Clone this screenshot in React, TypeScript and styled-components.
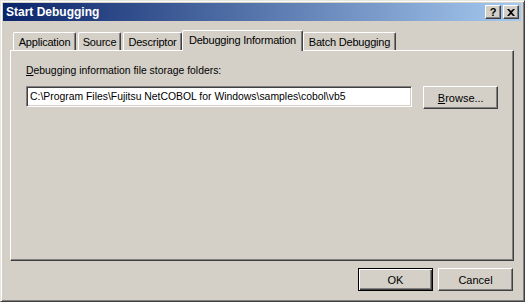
import React from "react";
import styled, { createGlobalStyle } from "styled-components";

const GlobalStyle = createGlobalStyle`
  html, body {
    margin: 0;
    padding: 0;
    background: #d4d0c8;
  }
  body {
    font-family: "Liberation Sans", Arial, sans-serif;
    font-size: 10px;
    color: #000;
  }
`;

const tabs = [
  { label: "Application", width: 63 },
  { label: "Source", width: 43 },
  { label: "Descriptor", width: 59 },
  { label: "Debugging Information", width: 121, active: true },
  { label: "Batch Debugging", width: 93 },
];

const App = () => {
  return (
    <>
      <GlobalStyle />
      <Window>
        <TitleBar>
          <Title>Start Debugging</Title>
          <CaptionButtons>
            <CaptionButton>?</CaptionButton>
            <CaptionButton>
              <svg width="8" height="7" viewBox="0 0 8 7">
                <path d="M0 0h2l2 2 2-2h2L5 3.5 8 7H6L4 5 2 7H0l3-3.5z" fill="#000" />
              </svg>
            </CaptionButton>
          </CaptionButtons>
        </TitleBar>
        <Body>
          <TabRow>
            {tabs.map((t) => (
              <Tab key={t.label} active={!!t.active} w={t.width}>
                {t.label}
              </Tab>
            ))}
          </TabRow>
          <Panel>
            <Label>
              <u>D</u>ebugging information file storage folders:
            </Label>
            <FieldRow>
              <PathInput>
                C:\Program Files\Fujitsu NetCOBOL for Windows\samples\cobol\vb5
              </PathInput>
              <Button>
                <u>B</u>rowse...
              </Button>
            </FieldRow>
          </Panel>
          <Footer>
            <Button isDefault>OK</Button>
            <Button>Cancel</Button>
          </Footer>
        </Body>
      </Window>
    </>
  );
};

const Window = styled.div`
  width: 525px;
  height: 302px;
  box-sizing: border-box;
  background: #d4d0c8;
  border: 1px solid;
  border-color: #e8e6e0 #404040 #404040 #e8e6e0;
  box-shadow: inset 1px 1px #ffffff, inset -1px -1px #808080;
  padding: 2px 3px 2px 2px;
  display: flex;
  flex-direction: column;
`;

const TitleBar = styled.div`
  height: 18px;
  display: flex;
  align-items: center;
  justify-content: space-between;
  padding: 0 2px 0 3px;
  background: linear-gradient(to right, #0a246a, #a6caf0);
`;

const Title = styled.span`
  color: #fff;
  font-weight: bold;
  font-size: 12px;
`;

const CaptionButtons = styled.div`
  display: flex;
  gap: 2px;
`;

const CaptionButton = styled.div`
  width: 16px;
  height: 14px;
  box-sizing: border-box;
  background: #d4d0c8;
  border: 1px solid;
  border-color: #fff #404040 #404040 #fff;
  box-shadow: inset -1px -1px #808080;
  display: flex;
  align-items: center;
  justify-content: center;
  font-weight: bold;
  font-size: 11px;
  line-height: 1;
`;

const Body = styled.div`
  flex: 1;
  display: flex;
  flex-direction: column;
  padding: 8px 7px 0 7px;
`;

const TabRow = styled.div`
  display: flex;
  align-items: flex-end;
  height: 21px;
  padding-left: 3px;
  position: relative;
  z-index: 1;
`;

const Tab = styled.div<{ active: boolean; w: number }>`
  box-sizing: border-box;
  width: ${(p) => p.w}px;
  height: ${(p) => (p.active ? "21px" : "18px")};
  margin: 0 ${(p) => (p.active ? "-1px" : "1px")} ${(p) => (p.active ? "-1px" : "0")};
  background: #d4d0c8;
  border-top: 1px solid #fff;
  border-left: 1px solid #fff;
  border-right: 1px solid #404040;
  box-shadow: inset -1px 0 #808080;
  border-radius: 2px 2px 0 0;
  display: flex;
  justify-content: center;
  align-items: ${(p) => (p.active ? "flex-start" : "center")};
  padding-top: ${(p) => (p.active ? "3px" : "0")};
  font-size: 11px;
  letter-spacing: -0.2px;
  white-space: nowrap;
  &:first-child {
    margin-left: 0;
  }
`;

const Panel = styled.div`
  height: 211px;
  box-sizing: border-box;
  border: 1px solid;
  border-color: #fff #404040 #404040 #fff;
  box-shadow: inset -1px -1px #808080;
  padding: 13px 15px 0 15px;
  display: flex;
  flex-direction: column;
`;

const Label = styled.div`
  height: 14px;
  line-height: 14px;
  font-size: 10.4px;
`;

const FieldRow = styled.div`
  display: flex;
  align-items: flex-start;
  gap: 11px;
  margin-top: 8px;
`;

const PathInput = styled.div`
  width: 389px;
  height: 21px;
  box-sizing: border-box;
  background: #fff;
  border: 1px solid;
  border-color: #808080 #fff #fff #808080;
  box-shadow: inset 1px 1px #404040, inset -1px -1px #d4d0c8;
  padding: 0 3px;
  display: flex;
  align-items: center;
  white-space: nowrap;
  overflow: hidden;
  font-size: 10.4px;
`;

const Button = styled.div<{ isDefault?: boolean }>`
  width: 75px;
  height: 23px;
  box-sizing: border-box;
  background: #d4d0c8;
  border: 1px solid;
  border-color: ${(p) =>
    p.isDefault ? "#000" : "#fff #404040 #404040 #fff"};
  box-shadow: ${(p) =>
    p.isDefault
      ? "inset 1px 1px #fff, inset -1px -1px #404040, inset -2px -2px #808080"
      : "inset -1px -1px #808080"};
  display: flex;
  align-items: center;
  justify-content: center;
  font-size: 11px;
`;

const Footer = styled.div`
  display: flex;
  justify-content: flex-end;
  gap: 5px;
  margin-top: 7px;
  padding-right: 1px;
`;

export default App;
